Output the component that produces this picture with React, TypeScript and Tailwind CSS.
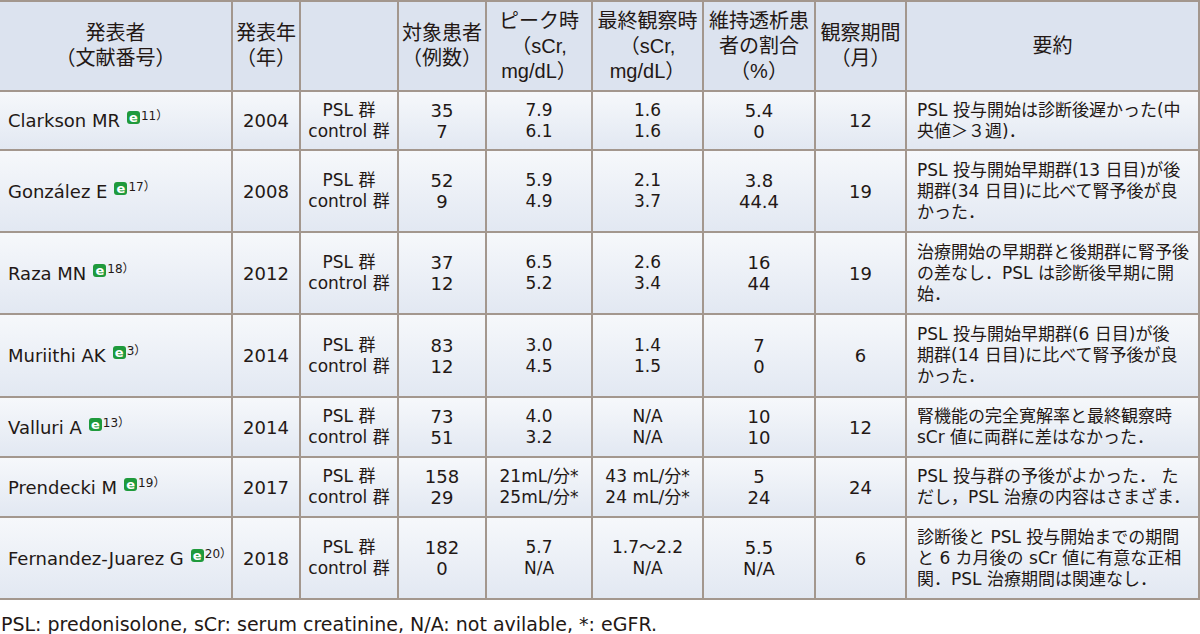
import React from "react";

type Row = {
  author: string;
  ref: string;
  year: string;
  n: [string, string];
  peak: [string, string];
  last: [string, string];
  dial: [string, string];
  period: string;
  summary: string[];
  h: string;
};

const rows: Row[] = [
  {
    author: "Clarkson MR",
    ref: "11）",
    year: "2004",
    n: ["35", "7"],
    peak: ["7.9", "6.1"],
    last: ["1.6", "1.6"],
    dial: ["5.4", "0"],
    period: "12",
    summary: ["PSL 投与開始は診断後遅かった(中", "央値＞３週)．"],
    h: "h-[59px]",
  },
  {
    author: "González E",
    ref: "17）",
    year: "2008",
    n: ["52", "9"],
    peak: ["5.9", "4.9"],
    last: ["2.1", "3.7"],
    dial: ["3.8", "44.4"],
    period: "19",
    summary: ["PSL 投与開始早期群(13 日目)が後", "期群(34 日目)に比べて腎予後が良", "かった．"],
    h: "h-[82px]",
  },
  {
    author: "Raza MN",
    ref: "18）",
    year: "2012",
    n: ["37", "12"],
    peak: ["6.5", "5.2"],
    last: ["2.6", "3.4"],
    dial: ["16", "44"],
    period: "19",
    summary: ["治療開始の早期群と後期群に腎予後", "の差なし．PSL は診断後早期に開", "始．"],
    h: "h-[82px]",
  },
  {
    author: "Muriithi AK",
    ref: "3）",
    year: "2014",
    n: ["83", "12"],
    peak: ["3.0", "4.5"],
    last: ["1.4", "1.5"],
    dial: ["7", "0"],
    period: "6",
    summary: ["PSL 投与開始早期群(6 日目)が後", "期群(14 日目)に比べて腎予後が良", "かった．"],
    h: "h-[83px]",
  },
  {
    author: "Valluri A",
    ref: "13）",
    year: "2014",
    n: ["73", "51"],
    peak: ["4.0", "3.2"],
    last: ["N/A", "N/A"],
    dial: ["10", "10"],
    period: "12",
    summary: ["腎機能の完全寛解率と最終観察時", "sCr 値に両群に差はなかった．"],
    h: "h-[60px]",
  },
  {
    author: "Prendecki M",
    ref: "19）",
    year: "2017",
    n: ["158", "29"],
    peak: ["21mL/分*", "25mL/分*"],
    last: ["43 mL/分*", "24 mL/分*"],
    dial: ["5", "24"],
    period: "24",
    summary: ["PSL 投与群の予後がよかった． た", "だし，PSL 治療の内容はさまざま．"],
    h: "h-[60px]",
  },
  {
    author: "Fernandez-Juarez G",
    ref: "20）",
    year: "2018",
    n: ["182", "0"],
    peak: ["5.7", "N/A"],
    last: ["1.7〜2.2", "N/A"],
    dial: ["5.5", "N/A"],
    period: "6",
    summary: ["診断後と PSL 投与開始までの期間", "と 6 カ月後の sCr 値に有意な正相", "関．PSL 治療期間は関連なし．"],
    h: "h-[82px]",
  },
];

const th =
  "border-2 border-[#a3978e] bg-[#dce3ef] text-[20px] leading-[25px] font-normal text-center align-middle p-0 font-['Liberation_Sans','Noto_Sans_CJK_JP',sans-serif]";
const td =
  "border-2 border-[#a3978e] bg-linear-to-b from-[#f6f8fb] to-[#e2e8f2] align-middle p-0";

function Two({ v }: { v: [string, string] }) {
  return (
    <div className="flex flex-col items-center whitespace-nowrap">
      <span>{v[0]}</span>
      <span>{v[1]}</span>
    </div>
  );
}

export default function App() {
  return (
    <div className="w-[1200px] h-[634px] bg-white text-[#231815] font-['DejaVu_Sans','Noto_Sans_CJK_JP',sans-serif] overflow-hidden">
      <table className="table-fixed border-collapse w-[1199px] text-[17px] leading-[21px]">
        <colgroup>
          <col className="w-[232px]" />
          <col className="w-[68px]" />
          <col className="w-[98px]" />
          <col className="w-[88px]" />
          <col className="w-[106px]" />
          <col className="w-[111px]" />
          <col className="w-[112px]" />
          <col className="w-[91px]" />
          <col className="w-[293px]" />
        </colgroup>
        <thead>
          <tr className="h-[90px]">
            <th className={th + " border-l-0"}>
              発表者
              <br />
              （文献番号）
            </th>
            <th className={th}>
              発表年
              <br />
              （年）
            </th>
            <th className={th}></th>
            <th className={th}>
              対象患者
              <br />
              （例数）
            </th>
            <th className={th}>
              ピーク時
              <br />
              （sCr,
              <br />
              mg/dL）
            </th>
            <th className={th}>
              最終観察時
              <br />
              （sCr,
              <br />
              mg/dL）
            </th>
            <th className={th + " whitespace-nowrap"}>
              維持透析患
              <br />
              者の割合
              <br />
              （%）
            </th>
            <th className={th}>
              観察期間
              <br />
              （月）
            </th>
            <th className={th}>要約</th>
          </tr>
        </thead>
        <tbody>
          {rows.map((r) => (
            <tr key={r.author} className={r.h}>
              <td className={td + " border-l-0 pl-[8px] whitespace-nowrap text-[18px]"}>
                {r.author}
                <span className="inline-flex items-center justify-center w-[13px] h-[13px] rounded-[3px] bg-[#1f9a3c] text-white text-[13px] font-bold leading-none align-[5px] ml-[7px]">
                  e
                </span>
                <span className="text-[12px] leading-none align-[7px] ml-[1px]">{r.ref}</span>
              </td>
              <td className={td + " text-center text-[18px]"}>{r.year}</td>
              <td className={td}>
                <Two v={["PSL 群", "control 群"]} />
              </td>
              <td className={td + " text-[18px]"}>
                <Two v={r.n} />
              </td>
              <td className={td}>
                <Two v={r.peak} />
              </td>
              <td className={td}>
                <Two v={r.last} />
              </td>
              <td className={td + " text-[18px]"}>
                <Two v={r.dial} />
              </td>
              <td className={td + " text-center text-[18px]"}>{r.period}</td>
              <td className={td + " pl-[10px]"}>
                <div className="flex flex-col whitespace-nowrap">
                  {r.summary.map((s) => (
                    <span key={s}>{s}</span>
                  ))}
                </div>
              </td>
            </tr>
          ))}
        </tbody>
      </table>
      <p className="mt-[13px] text-[19px] leading-[23px] pl-[1px]">
        PSL: predonisolone, sCr: serum creatinine, N/A: not avilable, *: eGFR.
      </p>
    </div>
  );
}
